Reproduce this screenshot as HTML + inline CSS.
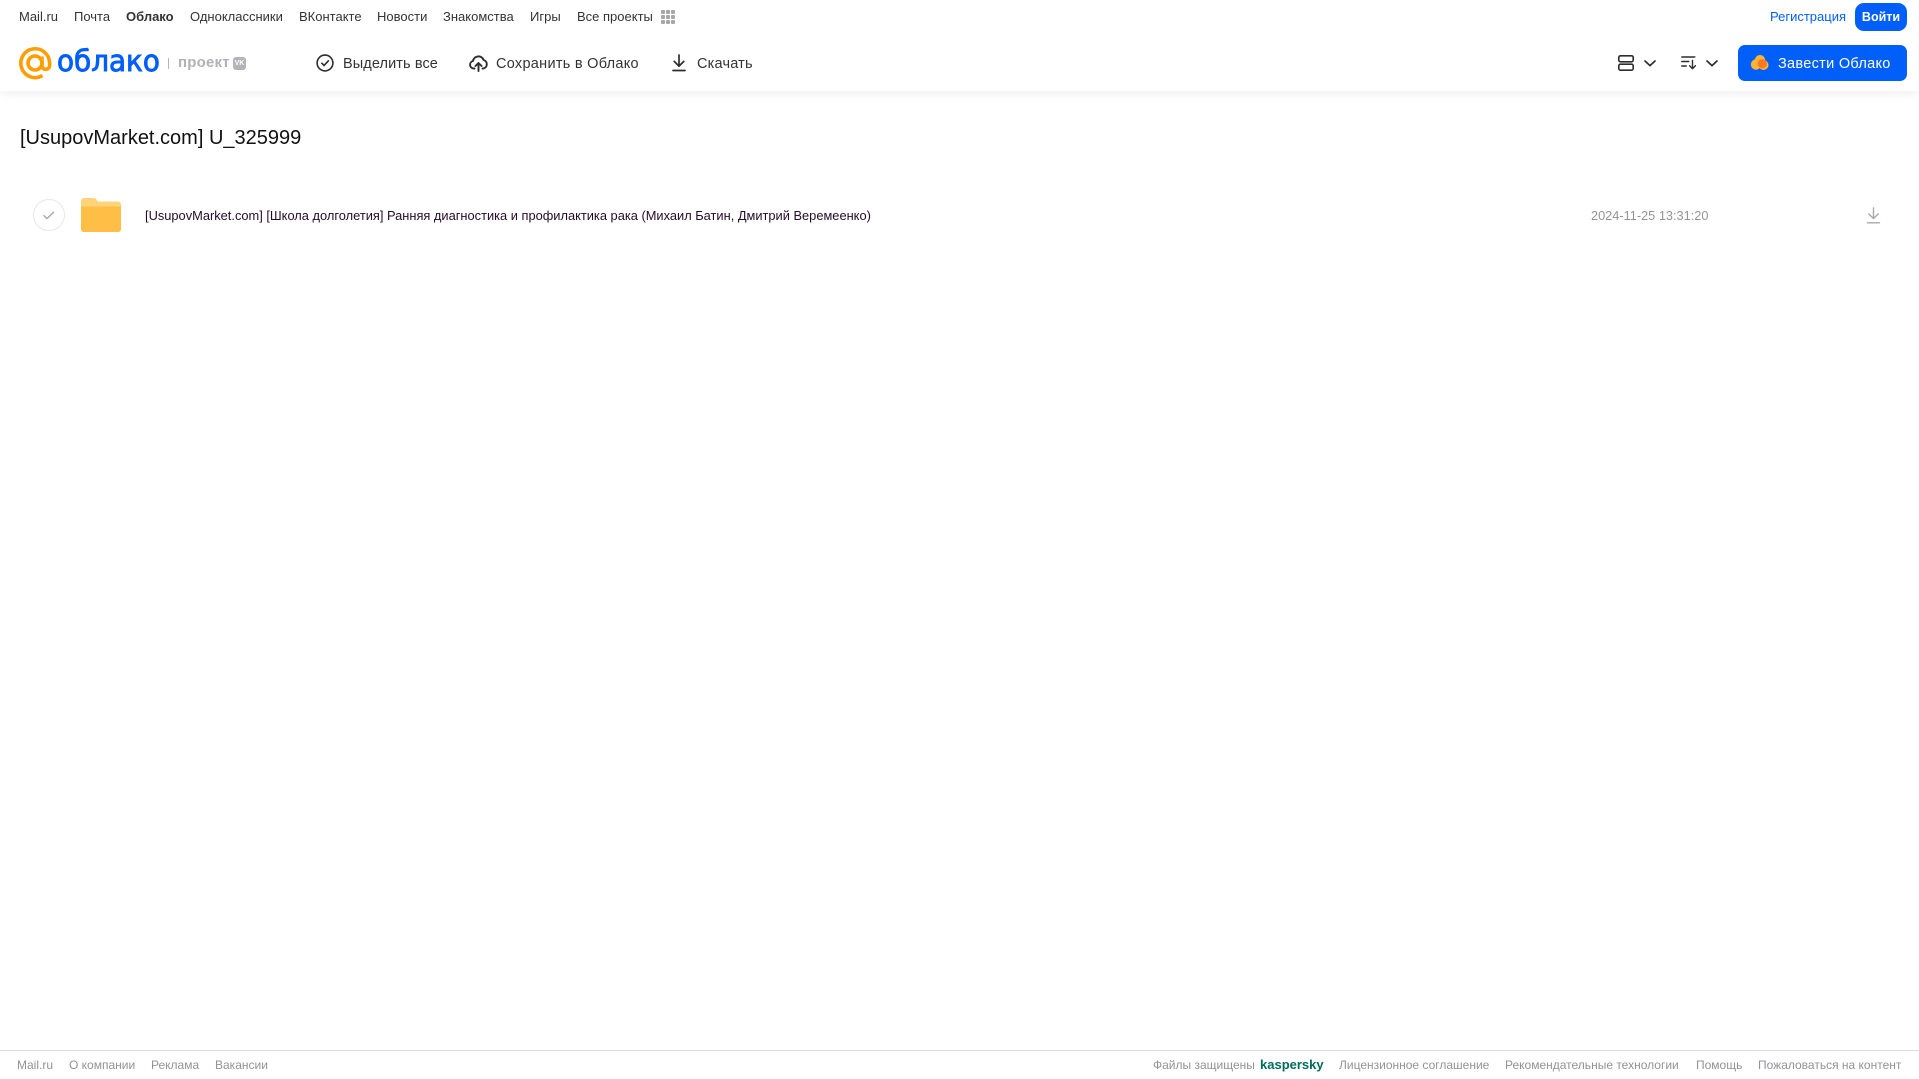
<!DOCTYPE html>
<html lang="ru"><head><meta charset="utf-8"><title>Облако</title>
<style>
html,body{margin:0;padding:0;background:#fff}
body{width:1919px;height:1079px;position:relative;overflow:hidden;font-family:"Liberation Sans",Arial,sans-serif}
.t{position:absolute;white-space:nowrap;line-height:20px;height:20px}
.n{top:7px;font-size:13px;color:#333}
.b{top:54px;font-size:14.5px;color:#333;letter-spacing:.25px}
.f{top:1055px;font-size:12px;color:#919399}
svg{position:absolute;overflow:visible}
#hd{position:absolute;left:0;top:0;width:1919px;height:91px;background:#fff;box-shadow:0 2px 10px rgba(0,0,0,.07)}
</style></head><body>
<div id="hd"></div>
<span class="t n" style="left:19px">Mail.ru</span>
<span class="t n" style="left:74px">Почта</span>
<span class="t n" style="left:126px;font-weight:bold">Облако</span>
<span class="t n" style="left:190px">Одноклассники</span>
<span class="t n" style="left:299px">ВКонтакте</span>
<span class="t n" style="left:377px">Новости</span>
<span class="t n" style="left:443px">Знакомства</span>
<span class="t n" style="left:530px">Игры</span>
<span class="t n" style="left:577px">Все проекты</span>
<svg style="left:661px;top:10px" width="14" height="14" fill="#a5a7ab"><rect width="4" height="4" rx="1"/><rect x="5" width="4" height="4" rx="1"/><rect x="10" width="4" height="4" rx="1"/><rect y="5" width="4" height="4" rx="1"/><rect x="5" y="5" width="4" height="4" rx="1"/><rect x="10" y="5" width="4" height="4" rx="1"/><rect y="10" width="4" height="4" rx="1"/><rect x="5" y="10" width="4" height="4" rx="1"/><rect x="10" y="10" width="4" height="4" rx="1"/></svg>
<span class="t n" style="left:1770px;color:#005ff9">Регистрация</span>
<div style="position:absolute;left:1855px;top:3px;width:52px;height:28px;border-radius:9px;background:#005ff9;color:#fff;font-size:12.5px;line-height:28px;text-align:center;font-weight:bold">Войти</div>

<!-- logo -->
<svg style="left:19px;top:47px" width="33" height="33" viewBox="0 0 33 33" fill="none" stroke="#ff9e00" stroke-width="3.6"><circle cx="16" cy="16" r="7"/><path d="M23 9.5V18.5a3.8 3.8 0 0 0 7.6 0V16A14.4 14.4 0 1 0 23.5 28.6"/></svg>
<span class="t" style="left:57px;top:42px;height:38px;line-height:38px;font-family:'DejaVu Sans',sans-serif;font-size:29px;color:#005ff9;-webkit-text-stroke:.9px #005ff9;transform:scaleX(.96);transform-origin:0 50%">облако</span>
<div style="position:absolute;left:168px;top:58px;width:1px;height:11px;background:#b5b7bb"></div>
<span class="t" style="left:178px;top:53px;font-size:15px;font-weight:bold;color:#b0b2b6;letter-spacing:.2px">проект</span>
<div style="position:absolute;left:233px;top:57px;width:13px;height:13px;border-radius:3px;background:#b2b4b8;color:#fff;font-size:7px;line-height:13px;text-align:center;font-weight:bold">VK</div>

<!-- toolbar -->
<svg style="left:316px;top:54px" width="18" height="18" fill="none" stroke="#2c2d2e" stroke-width="1.6" stroke-linecap="round" stroke-linejoin="round"><circle cx="9" cy="9" r="7.9"/><path d="M5.8 9.2l2.3 2.3 4.2-4.6"/></svg>
<span class="t b" style="left:343px;letter-spacing:.1px">Выделить все</span>
<svg style="left:469px;top:54px" width="19" height="18" fill="none" stroke="#2c2d2e" stroke-width="1.9" stroke-linecap="round" stroke-linejoin="round"><path d="M5.500 14.500H4.800A3.800 3.800 0 0 1 4 7 5.500 5.500 0 0 1 14.600 6 4.400 4.400 0 0 1 14.500 14.500H13.500"/><path d="M9.500 17V9.500M6.400 12l3.100-3 3.100 3"/></svg>
<span class="t b" style="left:496px;letter-spacing:.28px">Сохранить в Облако</span>
<svg style="left:672px;top:54px" width="14" height="18" fill="none" stroke="#2c2d2e" stroke-width="1.7" stroke-linecap="round" stroke-linejoin="round"><path d="M7 1v11M2.200 7.400L7 12.200l4.800-4.800M1 16.500h12"/></svg>
<span class="t b" style="left:697px;letter-spacing:.2px">Скачать</span>

<svg style="left:1618px;top:55px" width="16" height="16" fill="none" stroke="#2c2d2e" stroke-width="1.6"><rect x=".8" y=".8" width="14.4" height="6" rx="1.6"/><rect x=".8" y="9.2" width="14.4" height="6" rx="1.6"/></svg>
<svg style="left:1644px;top:60px" width="12" height="7" fill="none" stroke="#2c2d2e" stroke-width="1.7" stroke-linecap="round" stroke-linejoin="round"><path d="M1 1l5 4.600L11 1"/></svg>
<svg style="left:1681px;top:56px" width="16" height="14" fill="none" stroke="#2c2d2e" stroke-width="1.4" stroke-linecap="round" stroke-linejoin="round"><path d="M.8 1h13M.8 5.500h7M.8 10h4.500M11.500 4.500v8M8.600 9.800l2.900 2.900 2.900-2.900"/></svg>
<svg style="left:1706px;top:60px" width="12" height="7" fill="none" stroke="#2c2d2e" stroke-width="1.7" stroke-linecap="round" stroke-linejoin="round"><path d="M1 1l5 4.600L11 1"/></svg>

<div style="position:absolute;left:1738px;top:45px;width:169px;height:36px;border-radius:7px;background:#005ff9"></div>
<svg style="left:1750px;top:54px" width="20" height="17"><circle cx="6" cy="10.500" r="5.200" fill="#ffb337"/><circle cx="10" cy="6.200" r="5.200" fill="#ffb337"/><circle cx="13.500" cy="11" r="5" fill="#ffb337"/><circle cx="12.300" cy="9.800" r="4.600" fill="#ff7a1f"/></svg>
<span class="t b" style="left:1778px;color:#fff;letter-spacing:.3px">Завести Облако</span>

<!-- title -->
<span class="t" style="left:20px;top:125px;height:26px;line-height:26px;font-size:20px;color:#111">[UsupovMarket.com] U_325999</span>

<!-- row -->
<div style="position:absolute;left:33px;top:199px;width:30px;height:30px;border-radius:50%;border:1px solid #e6e7e9;background:#fff"></div>
<svg style="left:43px;top:211px" width="12" height="9" fill="none" stroke="#a6a8ac" stroke-width="1.4" stroke-linecap="round" stroke-linejoin="round"><path d="M1 4.600l3 3 6.600-6.400"/></svg>
<svg style="left:81px;top:198px" width="40" height="34"><path d="M0 3a3 3 0 0 1 3-3h9.500c1.400 0 2.200.6 3 1.600L17 3.500h20a3 3 0 0 1 3 3V31a3 3 0 0 1-3 3H3a3 3 0 0 1-3-3z" fill="#ffd37a"/><path d="M0 8.500h40V31a3 3 0 0 1-3 3H3a3 3 0 0 1-3-3z" fill="#ffbf47"/></svg>
<span class="t" style="left:145px;top:206px;font-size:12.85px;color:#260a2c">[UsupovMarket.com] [Школа долголетия] Ранняя диагностика и профилактика рака (Михаил Батин, Дмитрий Веремеенко)</span>
<span class="t" style="left:1591px;top:206px;font-size:12.75px;color:#929497">2024-11-25 13:31:20</span>
<svg style="left:1867px;top:207px" width="13" height="17" fill="none" stroke="#a6a8ac" stroke-width="1.4" stroke-linecap="round" stroke-linejoin="round"><path d="M6.500 1v10.500M1.800 7l4.700 4.500L11.200 7M.5 15.800h12"/></svg>

<!-- footer -->
<div style="position:absolute;left:0;top:1050px;width:1919px;height:1px;background:#dcdcdc"></div>
<span class="t f" style="left:17px">Mail.ru</span>
<span class="t f" style="left:69px">О компании</span>
<span class="t f" style="left:151px">Реклама</span>
<span class="t f" style="left:215px">Вакансии</span>
<span class="t f" style="left:1153px">Файлы защищены</span>
<span class="t f" style="left:1260px;font-size:13px;font-weight:bold;color:#006d5c">kaspersky</span>
<span class="t f" style="left:1339px">Лицензионное соглашение</span>
<span class="t f" style="left:1505px">Рекомендательные технологии</span>
<span class="t f" style="left:1696px">Помощь</span>
<span class="t f" style="left:1758px">Пожаловаться на контент</span>
</body></html>
